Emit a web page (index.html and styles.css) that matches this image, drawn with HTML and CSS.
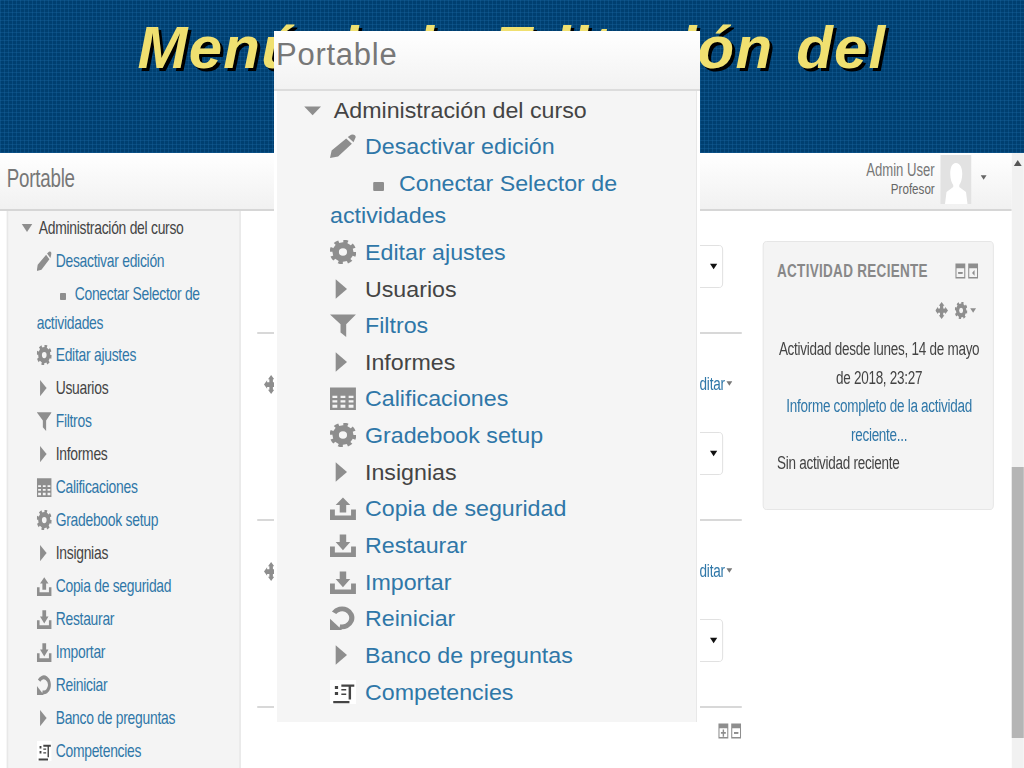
FILE: index.html
```html
<!DOCTYPE html>
<html lang="es">
<head>
<meta charset="utf-8">
<title>Menú de la administración del curso</title>
<link rel="stylesheet" href="styles.css">
</head>
<body>
<svg class="defs" width="0" height="0" aria-hidden="true">
  <symbol id="i-pencil" viewBox="0 0 16 16"><path d="M1 11 10 3l3.5 3.5L5 15l-5 1ZM11 2l2-1.5q1.500-.5 2.500.5.700 1 0 2l-1 2.500Z"/></symbol>
  <symbol id="i-gear" viewBox="0 0 16 16"><circle cx="8" cy="8" r="4.500" fill="none" stroke="currentColor" stroke-width="4"/><circle cx="8" cy="8" r="7" fill="none" stroke="currentColor" stroke-width="2.500" stroke-dasharray="2.750 2.750"/></symbol>
  <symbol id="i-filter" viewBox="0 0 16 16"><path d="M0 1h16L10 7.500V16l-3.500-3V7.500Z"/></symbol>
  <symbol id="i-table" viewBox="0 0 16 16"><path fill-rule="evenodd" d="M0 1h16v15H0ZM1.500 6.500V8h3V6.500Zm5 0V8h3V6.500Zm5 0V8h3V6.500ZM1.500 9.500V11h3V9.500Zm5 0V11h3V9.500Zm5 0V11h3V9.500ZM1.500 12.500v2h3v-2Zm5 0v2h3v-2Zm5 0v2h3v-2Z"/></symbol>
  <symbol id="i-up" viewBox="0 0 16 16"><path d="M0 9h3v4h10V9h3v7H0ZM8 1l4.500 5H10v5H6V6H3.500Z"/></symbol>
  <symbol id="i-down" viewBox="0 0 16 16"><path d="M0 9h3v4h10V9h3v7H0ZM6 1h4v5h2.500L8 11.500 3.500 6H6Z"/></symbol>
  <symbol id="i-reset" viewBox="0 0 16 16"><path d="M2.500 4.500A6 6 0 1 1 6 13.700" fill="none" stroke="currentColor" stroke-width="3.200"/><path d="M0 8.500V16h7.500Z"/></symbol>
  <symbol id="i-comp" viewBox="0 0 16 16"><path fill="#fff" d="M0 0h16v16H0Z"/><path fill="#444" d="M2 14h10v1.500H2ZM3 4h2v2H3ZM3 8h2v2H3ZM7 3h8v1.500h-2V13h-1.500V4.500H7ZM7 6h3v1H7ZM7 9h3v1H7Z"/></symbol>
  <symbol id="i-right" viewBox="0 0 16 16"><path d="M3.500 1.500 10.500 8 3.500 14.500Z"/></symbol>
  <symbol id="i-caret" viewBox="0 0 16 16"><path d="M1 4h14L8 12Z"/></symbol>
  <symbol id="i-move" viewBox="0 0 16 16"><path d="M8 0l3.500 3.500H10V6h2.500V4.500L16 8l-3.500 3.500V10H10v2.500h1.500L8 16l-3.500-3.500H6V10H3.500v1.500L0 8l3.500-3.500V6H6V3.500H4.500Z"/></symbol>
  <symbol id="i-minus" viewBox="0 0 16 16"><path fill-rule="evenodd" d="M1 0h14v16H1ZM2.500 5v9.500h11V5ZM5 9h6v2H5Z"/><path d="M5 9h6v2H5Z"/></symbol>
  <symbol id="i-plus" viewBox="0 0 16 16"><path fill-rule="evenodd" d="M1 0h14v16H1ZM2.500 5v9.500h11V5Z"/><path d="M7 6.500h2V9h2.500v2H9v3H7v-3H4.500V9H7Z"/></symbol>
  <symbol id="i-side" viewBox="0 0 16 16"><path fill-rule="evenodd" d="M1 0h14v16H1ZM2.500 5v9.500h11V5Z"/><path d="M10 7 6.500 10 10 13Z"/></symbol>
  <symbol id="i-user" viewBox="0 0 41 49"><path fill="#fff" d="M20.500 8c6 0 8.500 5 8.500 11 0 5-2 9-4 11v2l9 5 2 12H6l2-12 9-5v-2c-2-2-4-6-4-11 0-6 2-11 7.500-11Z"/></symbol>
</svg>

<header class="banner">
  <h1 class="banner-title">Menú de la Editación del</h1>
</header>

<div class="page-clip">
  <div class="page">
    <div class="page-main">
      <div class="topbar">
        <span class="brand">Portable</span>
        <div class="user">
          <div class="user-text">
            <span class="user-name">Admin User</span>
            <span class="user-role">Profesor</span>
          </div>
          <svg class="avatar"><use href="#i-user"/></svg>
          <svg class="user-caret"><use href="#i-caret"/></svg>
        </div>
      </div>
      <div class="body-row">
        <aside class="sidebar">
          <ul class="nav nav-small">
            <li class="nav-head"><svg class="head-ico"><use href="#i-caret"/></svg><span>Administración del curso</span>
              <ul class="nav-sub">
                <li><svg class="ico"><use href="#i-pencil"/></svg><a>Desactivar edición</a></li>
                <li class="nested"><span class="bullet"></span><a>Conectar Selector de actividades</a></li>
                <li><svg class="ico"><use href="#i-gear"/></svg><a>Editar ajustes</a></li>
                <li class="plain"><svg class="ico"><use href="#i-right"/></svg><span>Usuarios</span></li>
                <li><svg class="ico"><use href="#i-filter"/></svg><a>Filtros</a></li>
                <li class="plain"><svg class="ico"><use href="#i-right"/></svg><span>Informes</span></li>
                <li><svg class="ico"><use href="#i-table"/></svg><a>Calificaciones</a></li>
                <li><svg class="ico"><use href="#i-gear"/></svg><a>Gradebook setup</a></li>
                <li class="plain"><svg class="ico"><use href="#i-right"/></svg><span>Insignias</span></li>
                <li><svg class="ico"><use href="#i-up"/></svg><a>Copia de seguridad</a></li>
                <li><svg class="ico"><use href="#i-down"/></svg><a>Restaurar</a></li>
                <li><svg class="ico"><use href="#i-down"/></svg><a>Importar</a></li>
                <li><svg class="ico"><use href="#i-reset"/></svg><a>Reiniciar</a></li>
                <li><svg class="ico"><use href="#i-right"/></svg><a>Banco de preguntas</a></li>
                <li><svg class="ico"><use href="#i-comp"/></svg><a>Competencies</a></li>
              </ul>
            </li>
          </ul>
        </aside>
        <main class="course">
          <div class="select"><svg class="select-arrow"><use href="#i-caret"/></svg></div>
          <div class="sep"></div>
          <div class="section-row"><svg class="move"><use href="#i-move"/></svg><a class="edit">Editar<svg class="edit-caret"><use href="#i-caret"/></svg></a></div>
          <div class="select"><svg class="select-arrow"><use href="#i-caret"/></svg></div>
          <div class="sep"></div>
          <div class="section-row"><svg class="move"><use href="#i-move"/></svg><a class="edit">Editar<svg class="edit-caret"><use href="#i-caret"/></svg></a></div>
          <div class="select"><svg class="select-arrow"><use href="#i-caret"/></svg></div>
          <div class="sep"></div>
          <div class="collapse-row"><svg class="box-ico"><use href="#i-plus"/></svg><svg class="box-ico"><use href="#i-minus"/></svg></div>
        </main>
        <section class="block">
          <div class="block-head">
            <h2 class="block-title">ACTIVIDAD RECIENTE</h2>
            <div class="block-icons"><svg class="box-ico"><use href="#i-minus"/></svg><svg class="box-ico"><use href="#i-side"/></svg></div>
          </div>
          <div class="block-tools"><svg class="tool"><use href="#i-move"/></svg><svg class="tool"><use href="#i-gear"/></svg><svg class="tool-caret"><use href="#i-caret"/></svg></div>
          <p class="block-line">Actividad desde lunes, 14 de mayo de 2018, 23:27</p>
          <p class="block-line"><a>Informe completo de la actividad reciente...</a></p>
          <p class="block-line block-left">Sin actividad reciente</p>
        </section>
      </div>
    </div>
    <div class="scrollbar">
      <svg class="scroll-up"><use href="#i-caret"/></svg>
      <div class="scroll-thumb"></div>
    </div>
  </div>
</div>

<section class="popup">
  <div class="popup-head">Portable</div>
  <div class="popup-body">
    <ul class="nav nav-large">
      <li class="nav-head"><svg class="head-ico"><use href="#i-caret"/></svg><span>Administración del curso</span>
        <ul class="nav-sub">
          <li><svg class="ico"><use href="#i-pencil"/></svg><a>Desactivar edición</a></li>
          <li class="nested"><span class="bullet"></span><a>Conectar Selector de actividades</a></li>
          <li><svg class="ico"><use href="#i-gear"/></svg><a>Editar ajustes</a></li>
          <li class="plain"><svg class="ico"><use href="#i-right"/></svg><span>Usuarios</span></li>
          <li><svg class="ico"><use href="#i-filter"/></svg><a>Filtros</a></li>
          <li class="plain"><svg class="ico"><use href="#i-right"/></svg><span>Informes</span></li>
          <li><svg class="ico"><use href="#i-table"/></svg><a>Calificaciones</a></li>
          <li><svg class="ico"><use href="#i-gear"/></svg><a>Gradebook setup</a></li>
          <li class="plain"><svg class="ico"><use href="#i-right"/></svg><span>Insignias</span></li>
          <li><svg class="ico"><use href="#i-up"/></svg><a>Copia de seguridad</a></li>
          <li><svg class="ico"><use href="#i-down"/></svg><a>Restaurar</a></li>
          <li><svg class="ico"><use href="#i-down"/></svg><a>Importar</a></li>
          <li><svg class="ico"><use href="#i-reset"/></svg><a>Reiniciar</a></li>
          <li><svg class="ico"><use href="#i-right"/></svg><a>Banco de preguntas</a></li>
          <li><svg class="ico"><use href="#i-comp"/></svg><a>Competencies</a></li>
        </ul>
      </li>
    </ul>
  </div>
</section>
</body>
</html>
```
FILE: styles.css
```css
* { box-sizing: border-box; }
html, body { margin: 0; padding: 0; }
body {
  position: relative;
  width: 1024px;
  height: 768px;
  overflow: hidden;
  background: #fff;
  font-family: "Liberation Sans", Arial, sans-serif;
  color: #444;
}
.defs { position: absolute; }
a { color: #2f77a8; }
ul { list-style: none; margin: 0; padding: 0; }
svg { fill: currentColor; display: inline-block; }

.banner {
  height: 153px;
  padding-top: 12px;
  text-align: center;
  background-color: #003f70;
  background-image:
    repeating-linear-gradient(90deg, rgba(30,110,170,.3) 0 1px, transparent 1px 4px),
    repeating-linear-gradient(0deg, rgba(30,110,170,.3) 0 1px, transparent 1px 4px);
}
.banner-title {
  margin: 0;
  font-size: 60px;
  line-height: 72px;
  font-style: italic;
  font-weight: 700;
  letter-spacing: 1.2px;
  word-spacing: 5px;
  white-space: nowrap;
  color: #f0e070;
  text-shadow: 3px 3px 0 #000;
}

.page-clip { height: 615px; overflow: hidden; }
.page {
  display: grid;
  grid-template-columns: 1349.33px 1fr;
  width: 1365.33px;
  height: 615px;
  transform: scaleX(.75);
  transform-origin: left top;
}
.page-main { display: flex; flex-direction: column; min-width: 0; }

.topbar {
  display: flex;
  justify-content: space-between;
  align-items: center;
  height: 58px;
  padding: 0 33px 0 9px;
  border-bottom: 2px solid #d6d6d6;
  background: linear-gradient(#fff, #f1f1f1);
}
.brand { margin-bottom: 5px; font-size: 25px; letter-spacing: -.3px; color: #777; }
.user { display: flex; align-items: center; margin-bottom: 4px; }
.user-text { display: flex; flex-direction: column; align-items: flex-end; color: #777; }
.user-name { font-size: 17.500px; line-height: 19px; }
.user-role { font-size: 15.500px; line-height: 17px; color: #666; }
.avatar { width: 41px; height: 49px; margin-left: 8px; background: #e2e2e2; }
.user-caret { width: 9px; height: 9px; margin: 0 0 4px 12px; color: #666; }

.body-row { display: flex; flex: 1; min-height: 0; }
.sidebar {
  flex: none;
  width: 312px;
  margin-left: 9.33px;
  padding: 2px 0 0 16.300px;
  background: #f4f4f4;
  border: solid #e8e8e8;
  border-width: 0 2px 0 2px;
  overflow: hidden;
}

.nav-small { --lh: 29px; --mb: 4px; --nb: 3px; --ico: 20px; --gap: 5.300px; --font: 18.500px; --ls: -.35px; --sub: 21.300px; --head: 16px; --headgap: 8px; --bw: 8px; --bh: 7px; --bl: 30.700px; --br: 12px; --nt: 0px; --st: 4px; }
.nav-large {
  --lh: 32px; --mb: 4.650px; --nb: 4.650px; --ico: 24px; --gap: 8.400px; --font: 21.500px; --ls: 0px; --sub: 25px; --head: 17.800px; --headgap: 10.700px; --bw: 10.200px; --bh: 9px; --bl: 39.800px; --br: 13.900px; --nt: 1px; --st: 3.650px;
  width: 350px;
  transform: scaleX(1.08);
  transform-origin: left top;
}
.nav { font-size: var(--font); line-height: var(--lh); letter-spacing: var(--ls); }
.nav-head { white-space: nowrap; }
.head-ico { width: var(--head); height: var(--head); margin-right: var(--headgap); vertical-align: -2px; color: #8e8e8e; }
.nav-sub { padding-left: var(--sub); margin-top: var(--st); white-space: normal; }
.nav-sub li { margin-bottom: var(--mb); }
.ico { width: var(--ico); height: var(--ico); margin-right: var(--gap); vertical-align: -4px; color: #8e8e8e; }
.bullet {
  display: inline-block;
  width: var(--bw);
  height: var(--bh);
  margin: 0 var(--br) 0 var(--bl);
  background: #8e8e8e;
  border-radius: 1px;
}
.nav-sub .nested { padding-top: var(--nt); margin-bottom: var(--nb); }
.plain { color: #444; }

.course {
  flex: none;
  width: 646.67px;
  margin-left: 21.33px;
  padding-top: 34px;
}
.select {
  display: flex;
  justify-content: flex-end;
  align-items: center;
  width: 100px;
  height: 43px;
  margin-left: auto;
  margin-right: 25.300px;
  padding-right: 6px;
  background: #fff;
  border: 1px solid #ddd;
  border-radius: 5px;
}
.select-arrow { width: 11px; height: 11px; color: #111; }
.sep { height: 2px; margin-top: 44px; background: #d8d8d8; }
.section-row {
  display: flex;
  justify-content: space-between;
  align-items: center;
  height: 36px;
  margin: 32px 0 30px;
  padding: 0 12px 0 9.300px;
}
.move { width: 19px; height: 21px; color: #8e8e8e; }
.edit { font-size: 18px; letter-spacing: -.3px; }
.edit-caret { width: 9px; height: 9px; margin-left: 2px; vertical-align: 2px; color: #777; }
.collapse-row { display: flex; justify-content: flex-end; gap: 2px; margin-top: 14px; }
.box-ico { width: 15px; height: 18px; color: #8e8e8e; }

.block {
  flex: none;
  align-self: flex-start;
  width: 308px;
  height: 269px;
  margin: 30px 0 0 28px;
  padding: 17px 16px 0 17.700px;
  background: #f4f4f4;
  border: 1px solid #e4e4e4;
  border-radius: 5px;
}
.block-head { display: flex; justify-content: space-between; align-items: center; height: 24px; padding-right: 3px; }
.block-title { margin: 0; font-size: 18px; letter-spacing: .4px; font-weight: 700; color: #888; white-space: nowrap; }
.block-icons { display: flex; gap: 2px; }
.block-tools { display: flex; justify-content: flex-end; align-items: center; gap: 9px; height: 20px; margin: 17px 6px 15px 0; color: #8e8e8e; }
.tool { width: 17px; height: 17px; }
.tool-caret { width: 9px; height: 9px; margin-left: -6px; }
.block-line { margin: 0; font-size: 18px; letter-spacing: -.36px; line-height: 28.500px; text-align: center; }
.block-left { text-align: left; }

.scrollbar { display: flex; flex-direction: column; background: #f1f1f1; }
.scroll-up { width: 12px; height: 12px; margin: 4px 2px 0; transform: rotate(180deg); color: #555; }
.scroll-thumb { height: 271px; margin-top: 298px; background: #b5b5b5; }

.popup {
  position: absolute;
  left: 274px;
  top: 31px;
  width: 426px;
  height: 691px;
  display: flex;
  flex-direction: column;
  background: #fff;
}
.popup-head {
  flex: none;
  height: 60px;
  padding: 6px 0 0 2px;
  font-size: 31px;
  line-height: 36px;
  letter-spacing: .75px;
  color: #777;
  background: linear-gradient(#fff, #f2f2f2);
  border-bottom: 2px solid #dcdcdc;
}
.popup-body {
  flex: 1;
  min-height: 0;
  margin: 0 3px;
  padding: 4px 0 0 26px;
  background: #f5f5f5;
  border-right: 1px solid #e8e8e8;
  overflow: hidden;
}
```
